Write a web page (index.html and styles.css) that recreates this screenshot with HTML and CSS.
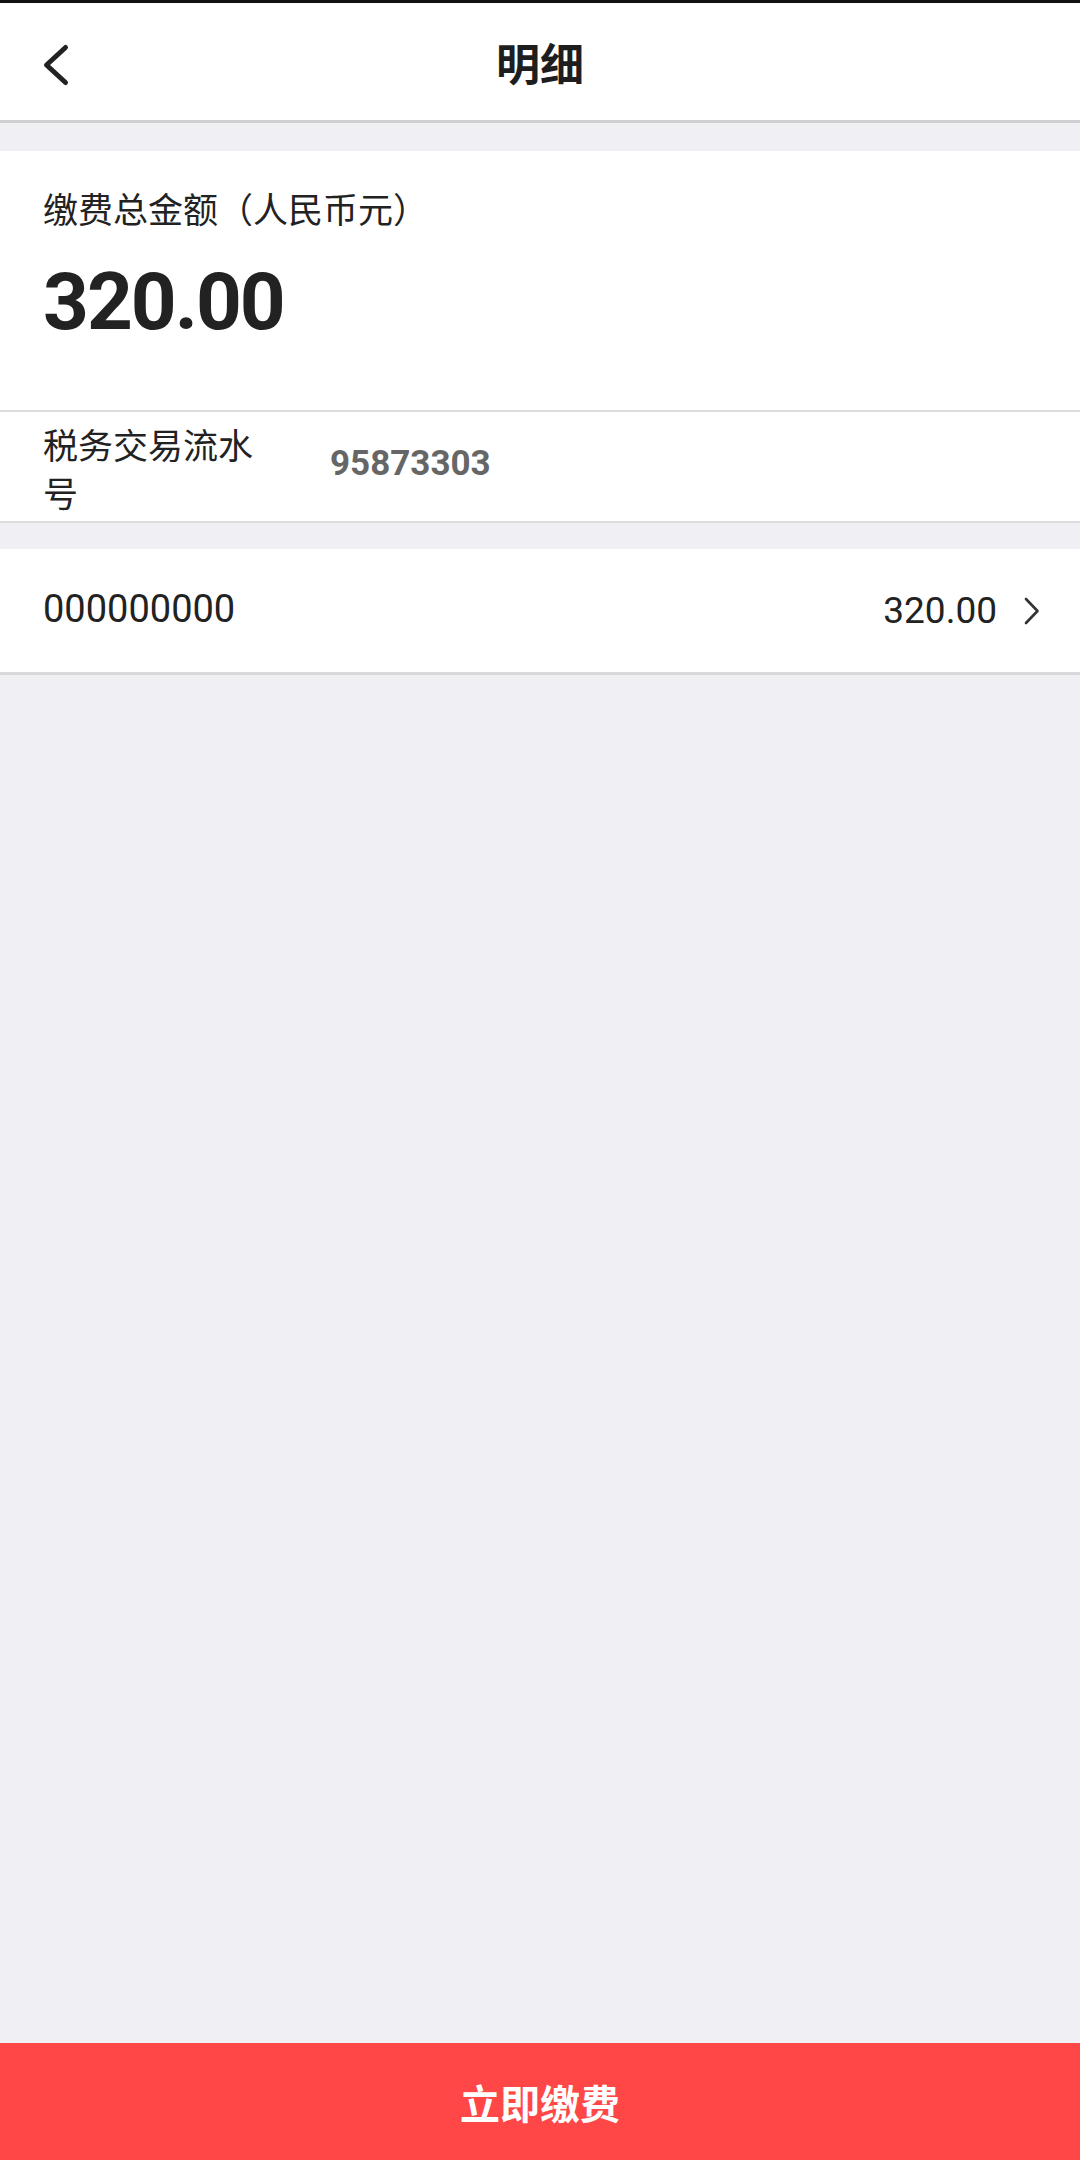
FILE: index.html
```html
<!DOCTYPE html>
<html lang="zh-CN">

<head>
    <meta charset="UTF-8">
    <meta name="viewport" content="width=device-width, initial-scale=1.0">
    <title>明细</title>
    <link rel="stylesheet" href="styles.css">
</head>

<body>
    <div class="page">
        <div class="topline"></div>
        <div class="header">
            <svg class="back" width="30" height="46" viewBox="0 0 30 46">
                <polyline points="25.5,5.5 6.5,23 25.5,40.5" fill="none" stroke="#222" stroke-width="5"
                    stroke-linecap="round" stroke-linejoin="round" />
            </svg>
            <div class="title">明细</div>
        </div>

        <div class="main">
            <div class="total">
                <div class="total-label">缴费总金额（人民币元）</div>
                <div class="total-num">320.00</div>
            </div>
            <div class="info">
                <div class="info-label">税务交易流水号</div>
                <div class="info-value">95873303</div>
            </div>

            <div class="item">
                <div class="item-name">000000000</div>
                <div class="item-right">
                    <span>320.00</span>
                    <svg width="16" height="28" viewBox="0 0 16 28">
                        <polyline points="2,2 13.5,14 2,26" fill="none" stroke="#333" stroke-width="2.6"
                            stroke-linecap="round" stroke-linejoin="round" />
                    </svg>
                </div>
            </div>
        </div>

        <div class="pay">立即缴费</div>
    </div>
</body>

</html>
```

FILE: styles.css
```css
* {
    padding: 0;
    margin: 0;
    box-sizing: border-box;
}

body {
    background-color: #efeff4;
    font-family: Roboto, "Noto Sans CJK SC", sans-serif;
    color: #222;
}

.page {
    display: flex;
    flex-direction: column;
    min-height: 100vh;
}

.topline {
    height: 3px;
    background-color: #111;
}

/* 顶部标题栏 */
.header {
    position: relative;
    height: 120px;
    background-color: #fff;
    border-bottom: 3px solid #cfcfd2;
    display: flex;
    align-items: center;
    justify-content: center;
}

.back {
    position: absolute;
    left: 40px;
    top: 39px;
}

.title {
    font-size: 44px;
    font-weight: 700;
    color: #1e1e1e;
}

.main {
    flex: 1;
    padding-top: 28px;
}

/* 总金额 */
.total {
    background-color: #fff;
    padding: 37px 43px 60px;
    border-bottom: 2px solid #dcdcdf;
}

.total-label {
    font-size: 35px;
    line-height: 48px;
    color: #222;
}

.total-num {
    margin-top: 18px;
    font-size: 80px;
    line-height: 96px;
    font-weight: 700;
    letter-spacing: -2px;
    color: #222;
}

.info {
    background-color: #fff;
    height: 111px;
    padding: 12px 43px 0;
    display: flex;
    border-bottom: 2px solid #dcdcdf;
}

.info-label {
    width: 220px;
    margin-right: 67px;
    font-size: 35px;
    line-height: 48px;
    color: #222;
}

.info-value {
    padding-top: 8px;
    font-size: 35px;
    line-height: 64px;
    font-weight: 700;
    color: #666;
}

/* 明细条目 */
.item {
    margin-top: 26px;
    background-color: #fff;
    height: 126px;
    padding: 0 40px 0 43px;
    border-bottom: 3px solid #d8d8db;
    display: flex;
    align-items: center;
    justify-content: space-between;
    font-size: 38px;
    color: #222;
}

.item-name {
    padding-bottom: 4px;
}

.item-right {
    display: flex;
    align-items: center;
}

.item-right span {
    font-size: 37px;
}

.item-right svg {
    margin-left: 27px;
}

.pay {
    height: 117px;
    background-color: #ff4747;
    color: #fff;
    font-size: 40px;
    font-weight: 700;
    display: flex;
    align-items: center;
    justify-content: center;
}
```
